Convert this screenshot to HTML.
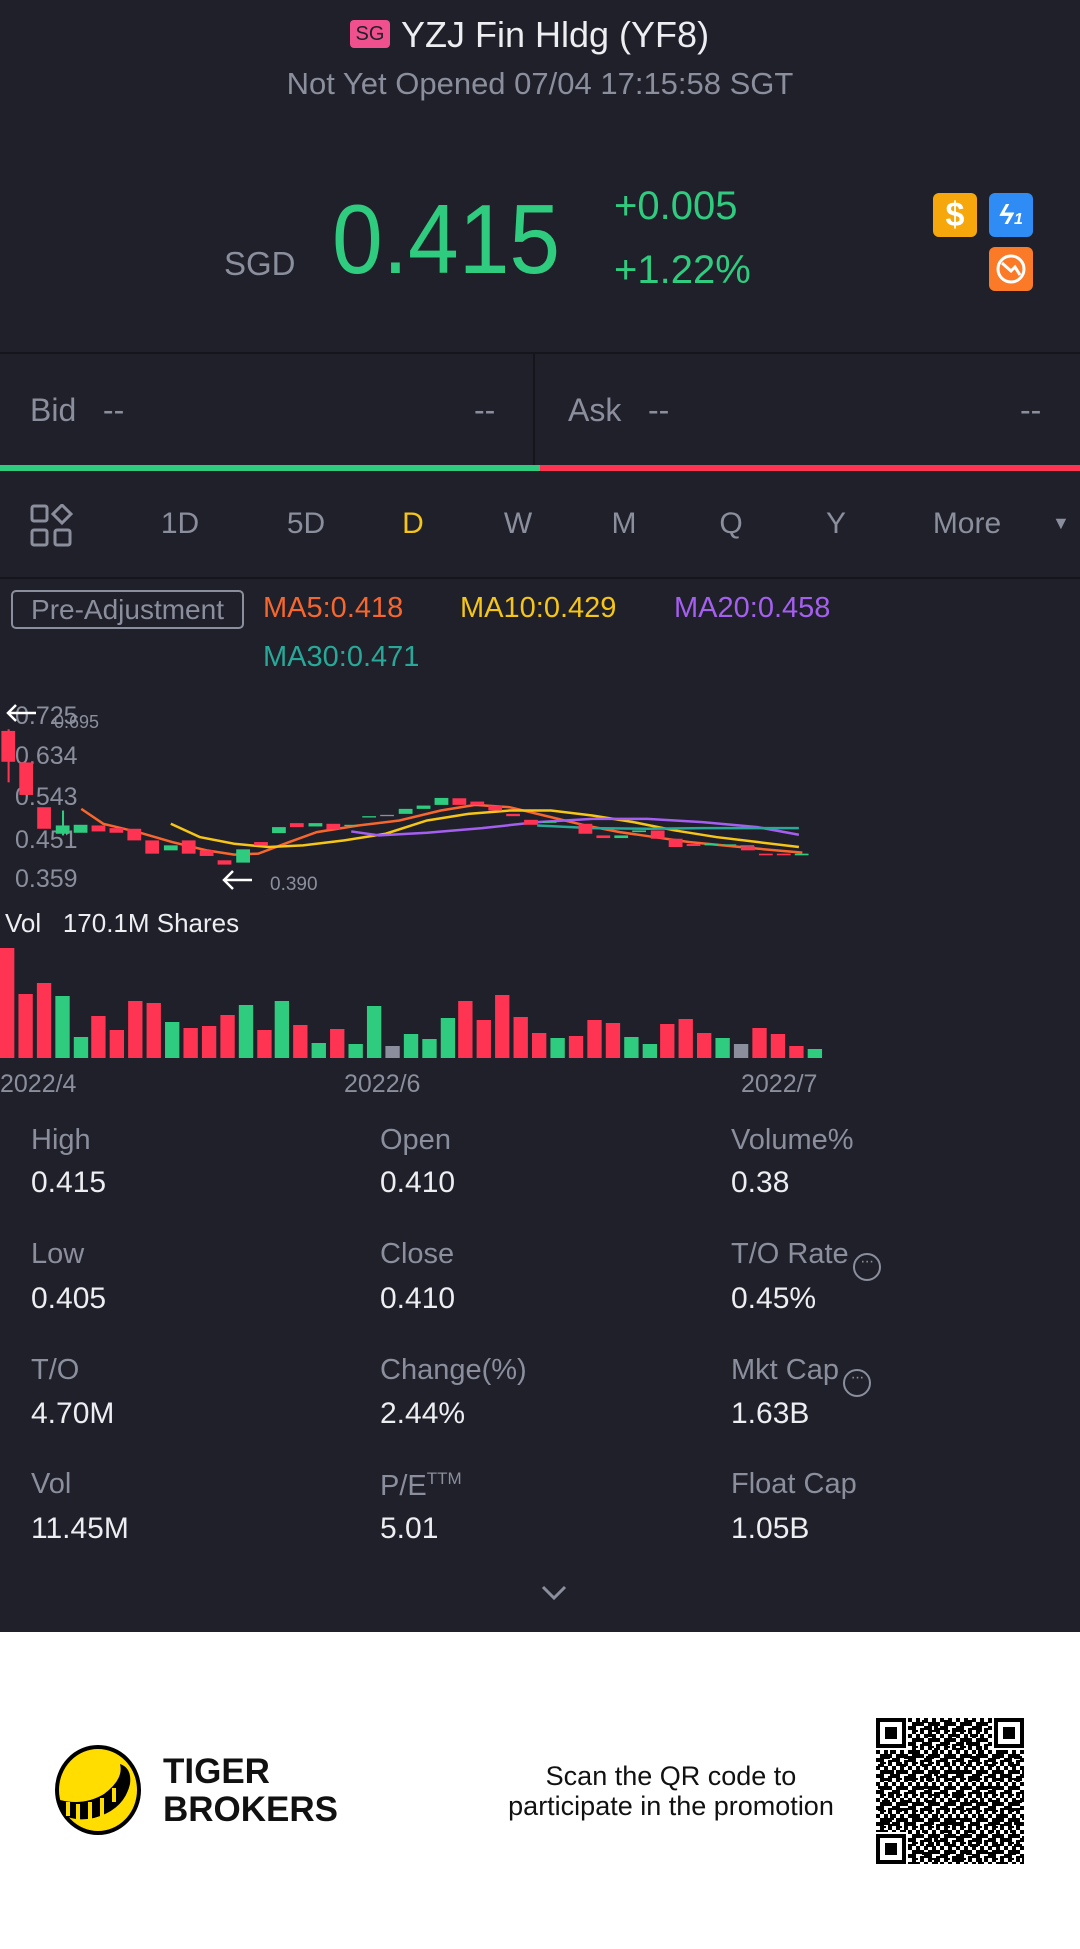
<!DOCTYPE html>
<html><head><meta charset="utf-8">
<style>
*{margin:0;padding:0;box-sizing:border-box}
body{width:1080px;height:1949px;background:#fff;font-family:"Liberation Sans",sans-serif;overflow:hidden;position:relative}
#dark{position:absolute;left:0;top:0;width:1080px;height:1632px;background:#1f2029}
.t{position:absolute;white-space:nowrap;line-height:1}
.g{color:#8b8e9c}
.w{color:#eceef2}
.grn{color:#2fcc7f}
.lab{font-size:29px;color:#8b8e9c}
.val{font-size:30px;color:#eceef2}
.tab{font-size:30px;color:#8b8e9c;transform:translateX(-50%)}
.dots{display:inline-block;width:28px;height:28px;border:2.5px solid #8b8e9c;border-radius:50%;vertical-align:-3px;margin-left:4px;text-align:center;font-size:16px;line-height:14px;letter-spacing:-1px}
</style></head><body>
<div id="dark"></div>

<!-- header -->
<div class="t" style="left:350px;top:20px;width:40px;height:28px;background:#f0508e;border-radius:4px;color:#1f2029;font-size:20px;line-height:28px;text-align:center">SG</div>
<div class="t w" style="left:401px;top:17px;font-size:36px">YZJ Fin Hldg (YF8)</div>
<div class="t g" style="left:0;width:1080px;text-align:center;top:68px;font-size:31px">Not Yet Opened 07/04 17:15:58 SGT</div>

<div class="t g" style="left:224px;top:247px;font-size:33px">SGD</div>
<div class="t grn" style="left:332px;top:190px;font-size:98px;transform:scaleX(0.93);transform-origin:left">0.415</div>
<div class="t grn" style="left:614px;top:186px;font-size:40px">+0.005</div>
<div class="t grn" style="left:614px;top:250px;font-size:40px">+1.22%</div>

<div class="t" style="left:933px;top:193px;width:44px;height:44px;background:#f5a70c;border-radius:6px;color:#fff;font-size:34px;font-weight:bold;text-align:center;line-height:44px">$</div>
<div class="t" style="left:989px;top:193px;width:44px;height:44px;background:#2f8cf5;border-radius:6px;color:#fff;font-size:28px;font-weight:bold;text-align:center;line-height:44px;font-style:italic">ϟ<span style="font-size:16px">1</span></div>
<div class="t" style="left:989px;top:247px;width:44px;height:44px;background:#fa7a28;border-radius:6px"><svg width="44" height="44"><circle cx="22" cy="22" r="13" fill="none" stroke="#fff" stroke-width="3"/><path d="M13 16 L22 24 L26 20 L31 28" fill="none" stroke="#fff" stroke-width="3"/></svg></div>

<!-- bid/ask -->
<div class="t" style="left:0;top:352px;width:1080px;height:2px;background:#15161c"></div>
<div class="t" style="left:533px;top:354px;width:2px;height:111px;background:#15161c"></div>
<div class="t g" style="left:30px;top:394px;font-size:32px">Bid&nbsp;&nbsp;&nbsp;--</div>
<div class="t g" style="left:474px;top:394px;font-size:32px">--</div>
<div class="t g" style="left:568px;top:394px;font-size:32px">Ask&nbsp;&nbsp;&nbsp;--</div>
<div class="t g" style="left:1020px;top:394px;font-size:32px">--</div>
<div class="t" style="left:0;top:465px;width:540px;height:6px;background:#2fcc7f"></div>
<div class="t" style="left:540px;top:465px;width:540px;height:6px;background:#ff3352"></div>

<!-- tabs -->
<svg class="t" style="left:30px;top:504px" width="44" height="44"><g fill="none" stroke="#8b8e9c" stroke-width="3"><rect x="2" y="2" width="15" height="15" rx="2"/><path d="M32 1 L41 10 L32 19 L23 10Z"/><rect x="2" y="26" width="15" height="15" rx="2"/><rect x="25" y="26" width="15" height="15" rx="2"/></g></svg>
<div class="t tab" style="left:180px;top:509px">1D</div>
<div class="t tab" style="left:306px;top:509px">5D</div>
<div class="t tab" style="left:413px;top:509px;color:#f5c518">D</div>
<div class="t tab" style="left:518px;top:509px">W</div>
<div class="t tab" style="left:624px;top:509px">M</div>
<div class="t tab" style="left:731px;top:509px">Q</div>
<div class="t tab" style="left:836px;top:509px">Y</div>
<div class="t tab" style="left:967px;top:509px">More</div>
<div class="t g" style="left:1052px;top:514px;font-size:18px">▼</div>
<div class="t" style="left:0;top:577px;width:1080px;height:2px;background:#15161c"></div>

<!-- MA -->
<div class="t g" style="left:11px;top:590px;width:233px;height:39px;border:2px solid #8b8e9c;border-radius:5px;font-size:28px;line-height:35px;text-align:center">Pre-Adjustment</div>
<div class="t" style="left:263px;top:594px;font-size:29px;color:#f7672d">MA5:0.418</div>
<div class="t" style="left:460px;top:594px;font-size:29px;color:#f5c518">MA10:0.429</div>
<div class="t" style="left:674px;top:594px;font-size:29px;color:#a55ff0">MA20:0.458</div>
<div class="t" style="left:263px;top:643px;font-size:29px;color:#28a898">MA30:0.471</div>

<!-- chart -->
<svg class="t" style="left:0;top:0" width="1080" height="1100">
<g fill="#8b8e9c" font-family="Liberation Sans" font-size="25">
<text x="15" y="724">0.725</text><text x="15" y="764">0.634</text><text x="15" y="805">0.543</text><text x="15" y="848">0.451</text><text x="15" y="887">0.359</text>
<text x="54" y="728" font-size="18">0.695</text><text x="270" y="890" font-size="19">0.390</text>
</g>
<g stroke="#fff" stroke-width="2.5" fill="none"><path d="M8 713 H36 M16 705 L8 713 L16 721"/><path d="M224 880 H252 M233 871 L224 880 L233 889"/></g>
<g transform="translate(0,580) scale(0.6887,0.3317)">
<g fill="none" stroke-width="2.5" vector-effect="non-scaling-stroke">
<polyline vector-effect="non-scaling-stroke" stroke="#f7672d" points="118,690 150,735 200,760 250,790 300,815 340,828 375,825 420,790 460,760 520,740 580,725 640,695 690,678 740,685 790,710 850,740 900,760 950,775 1000,790 1050,800 1100,810 1165,822"/>
<polyline vector-effect="non-scaling-stroke" stroke="#f5c518" points="248,735 290,775 340,795 390,805 440,800 500,785 560,765 620,725 680,705 740,695 800,695 860,710 920,730 980,755 1040,775 1100,790 1160,805"/>
<polyline vector-effect="non-scaling-stroke" stroke="#a55ff0" points="510,758 550,770 620,762 700,748 780,730 860,720 940,720 1020,730 1100,745 1160,768"/>
<polyline vector-effect="non-scaling-stroke" stroke="#28a898" points="780,740 860,748 940,750 1020,748 1100,748 1160,748"/>
</g>
<g fill="#ff3352">
<rect x="2" y="455" width="20" height="93"/><rect x="11" y="450" width="3" height="160"/>
<rect x="28" y="550" width="20" height="98"/>
<rect x="54" y="685" width="20" height="65"/>
<rect x="133" y="740" width="20" height="18"/><rect x="159" y="748" width="20" height="14"/><rect x="185" y="750" width="20" height="35"/>
<rect x="211" y="785" width="20" height="40"/><rect x="264" y="785" width="20" height="40"/><rect x="290" y="815" width="20" height="17"/><rect x="316" y="845" width="20" height="13"/>
<rect x="369" y="790" width="20" height="10"/><rect x="421" y="733" width="20" height="12"/><rect x="474" y="735" width="20" height="17"/>
<rect x="657" y="658" width="20" height="20"/><rect x="683" y="668" width="20" height="10"/><rect x="709" y="680" width="20" height="15"/><rect x="735" y="705" width="20" height="7"/><rect x="761" y="723" width="20" height="15"/>
<rect x="840" y="735" width="20" height="30"/><rect x="866" y="770" width="20" height="8"/><rect x="945" y="755" width="20" height="25"/><rect x="971" y="780" width="20" height="25"/><rect x="997" y="796" width="20" height="6"/>
<rect x="1076" y="803" width="20" height="12"/><rect x="1102" y="825" width="20" height="5"/><rect x="1128" y="825" width="20" height="5"/>
</g>
<g fill="#2fcc7f">
<rect x="81" y="740" width="20" height="25"/><rect x="90" y="695" width="3" height="75"/><rect x="107" y="738" width="20" height="24"/>
<rect x="238" y="800" width="20" height="15"/><rect x="343" y="812" width="20" height="40"/><rect x="395" y="745" width="20" height="18"/><rect x="448" y="733" width="20" height="10"/>
<rect x="500" y="738" width="20" height="4"/><rect x="526" y="712" width="20" height="4"/><rect x="579" y="690" width="20" height="15"/><rect x="605" y="680" width="20" height="10"/><rect x="631" y="657" width="20" height="21"/>
<rect x="788" y="728" width="20" height="4"/><rect x="892" y="770" width="20" height="8"/><rect x="918" y="755" width="20" height="5"/><rect x="1023" y="795" width="20" height="5"/><rect x="1049" y="797" width="20" height="3"/><rect x="1154" y="825" width="20" height="5"/>
</g>
<rect x="552" y="708" width="20" height="4" fill="#8b8e9c"/><rect x="1075" y="800" width="20" height="3" fill="#8b8e9c"/>
</g>
<text x="5" y="932" fill="#eceef2" font-family="Liberation Sans" font-size="26">Vol&nbsp;&nbsp;&nbsp;170.1M Shares</text>
<g transform="scale(1.025,1)">
<g fill="#ff3352">
<rect x="0" y="948" width="14" height="110"/><rect x="18" y="994" width="14" height="64"/><rect x="36" y="983" width="14" height="75"/>
<rect x="89" y="1016" width="14" height="42"/><rect x="107" y="1030" width="14" height="28"/><rect x="125" y="1001" width="14" height="57"/><rect x="143" y="1003" width="14" height="55"/>
<rect x="179" y="1028" width="14" height="30"/><rect x="197" y="1026" width="14" height="32"/><rect x="215" y="1015" width="14" height="43"/><rect x="251" y="1030" width="14" height="28"/><rect x="286" y="1025" width="14" height="33"/><rect x="322" y="1029" width="14" height="29"/>
<rect x="447" y="1001" width="14" height="57"/><rect x="465" y="1020" width="14" height="38"/><rect x="483" y="995" width="14" height="63"/><rect x="501" y="1017" width="14" height="41"/><rect x="519" y="1033" width="14" height="25"/>
<rect x="555" y="1036" width="14" height="22"/><rect x="573" y="1020" width="14" height="38"/><rect x="591" y="1023" width="14" height="35"/>
<rect x="644" y="1024" width="14" height="34"/><rect x="662" y="1019" width="14" height="39"/><rect x="680" y="1033" width="14" height="25"/>
<rect x="734" y="1028" width="14" height="30"/><rect x="752" y="1034" width="14" height="24"/><rect x="770" y="1046" width="14" height="12"/>
</g>
<g fill="#2fcc7f">
<rect x="54" y="996" width="14" height="62"/><rect x="72" y="1037" width="14" height="21"/><rect x="161" y="1022" width="14" height="36"/><rect x="233" y="1005" width="14" height="53"/>
<rect x="268" y="1001" width="14" height="57"/><rect x="304" y="1043" width="14" height="15"/><rect x="340" y="1044" width="14" height="14"/><rect x="358" y="1006" width="14" height="52"/>
<rect x="394" y="1034" width="14" height="24"/><rect x="412" y="1039" width="14" height="19"/><rect x="430" y="1018" width="14" height="40"/>
<rect x="537" y="1038" width="14" height="20"/><rect x="609" y="1037" width="14" height="21"/><rect x="627" y="1044" width="14" height="14"/><rect x="698" y="1038" width="14" height="20"/><rect x="788" y="1049" width="14" height="9"/>
</g>
<rect x="376" y="1046" width="14" height="12" fill="#8b8e9c"/><rect x="716" y="1044" width="14" height="14" fill="#8b8e9c"/>
</g>
<g fill="#8b8e9c" font-family="Liberation Sans" font-size="25"><text x="0" y="1092">2022/4</text><text x="344" y="1092">2022/6</text><text x="741" y="1092">2022/7</text></g>
</svg>

<!-- stats -->
<div class="t lab" style="left:31px;top:1126px">High</div><div class="t val" style="left:31px;top:1168px">0.415</div>
<div class="t lab" style="left:380px;top:1126px">Open</div><div class="t val" style="left:380px;top:1168px">0.410</div>
<div class="t lab" style="left:731px;top:1126px">Volume%</div><div class="t val" style="left:731px;top:1168px">0.38</div>
<div class="t lab" style="left:31px;top:1240px">Low</div><div class="t val" style="left:31px;top:1284px">0.405</div>
<div class="t lab" style="left:380px;top:1240px">Close</div><div class="t val" style="left:380px;top:1284px">0.410</div>
<div class="t lab" style="left:731px;top:1240px">T/O Rate<span class="dots">···</span></div><div class="t val" style="left:731px;top:1284px">0.45%</div>
<div class="t lab" style="left:31px;top:1356px">T/O</div><div class="t val" style="left:31px;top:1399px">4.70M</div>
<div class="t lab" style="left:380px;top:1356px">Change(%)</div><div class="t val" style="left:380px;top:1399px">2.44%</div>
<div class="t lab" style="left:731px;top:1356px">Mkt Cap<span class="dots">···</span></div><div class="t val" style="left:731px;top:1399px">1.63B</div>
<div class="t lab" style="left:31px;top:1470px">Vol</div><div class="t val" style="left:31px;top:1514px">11.45M</div>
<div class="t lab" style="left:380px;top:1470px">P/E<sup style="font-size:17px;vertical-align:11px">TTM</sup></div><div class="t val" style="left:380px;top:1514px">5.01</div>
<div class="t lab" style="left:731px;top:1470px">Float Cap</div><div class="t val" style="left:731px;top:1514px">1.05B</div>
<svg class="t" style="left:540px;top:1584px" width="28" height="18"><path d="M3 3 L14 14 L25 3" fill="none" stroke="#8b8e9c" stroke-width="3"/></svg>

<!-- footer -->
<svg class="t" style="left:54px;top:1744px" width="92" height="92"><ellipse cx="44" cy="46" rx="41" ry="43" fill="#ffdd00" stroke="#000" stroke-width="4"/><path d="M6 56 Q30 62 50 50 Q70 35 66 20 Q78 24 76 40 Q70 66 40 74 Q20 78 8 70Z" fill="#000"/><path d="M14 58 V72 M24 60 V76 M36 58 V76 M48 54 V72 M60 44 V58" stroke="#ffdd00" stroke-width="4"/></svg>
<div class="t" style="left:163px;top:1753px;font-size:35px;font-weight:bold;color:#111;line-height:38px">TIGER<br>BROKERS</div>
<div class="t" style="left:480px;width:382px;text-align:center;top:1761px;font-size:27px;color:#111;line-height:30px">Scan the QR code to<br>participate in the promotion</div>
<svg class="t" style="left:876px;top:1718px" width="148" height="146">
<defs><pattern id="qp" width="16" height="16" patternUnits="userSpaceOnUse"><rect x="0" y="0" width="4" height="4"/><rect x="8" y="0" width="4" height="8"/><rect x="4" y="4" width="4" height="4"/><rect x="12" y="4" width="4" height="4"/><rect x="0" y="8" width="8" height="4"/><rect x="12" y="10" width="4" height="6"/><rect x="4" y="12" width="4" height="4"/><rect x="8" y="12" width="2" height="2"/></pattern>
<pattern id="qp2" width="22" height="22" patternUnits="userSpaceOnUse"><rect x="2" y="2" width="6" height="3"/><rect x="14" y="8" width="4" height="6"/><rect x="6" y="16" width="8" height="3"/></pattern></defs>
<rect width="148" height="146" fill="url(#qp)"/><rect width="148" height="146" fill="url(#qp2)"/>
<g><rect x="0" y="0" width="32" height="32" fill="#fff"/><rect x="2" y="2" width="26" height="26" fill="none" stroke="#000" stroke-width="4"/><rect x="9" y="9" width="12" height="12"/>
<rect x="116" y="0" width="32" height="32" fill="#fff"/><rect x="120" y="2" width="26" height="26" fill="none" stroke="#000" stroke-width="4"/><rect x="127" y="9" width="12" height="12"/>
<rect x="0" y="114" width="32" height="32" fill="#fff"/><rect x="2" y="118" width="26" height="26" fill="none" stroke="#000" stroke-width="4"/><rect x="9" y="125" width="12" height="12"/></g>
</svg>
</body></html>
